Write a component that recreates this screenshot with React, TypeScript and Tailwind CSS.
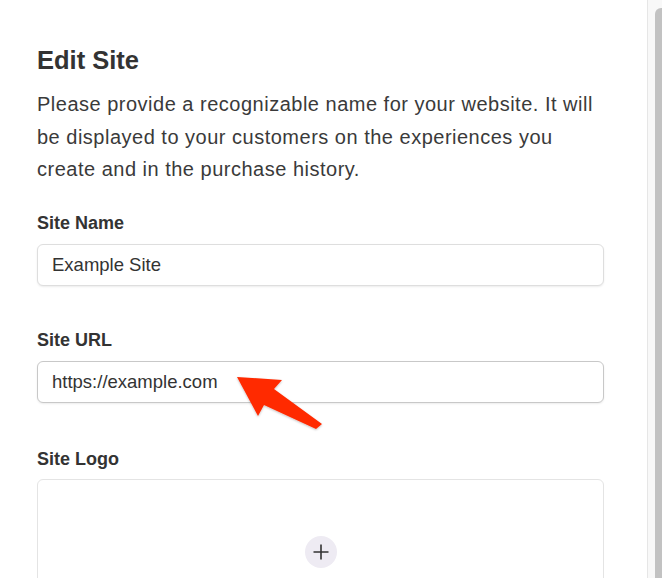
export default function App() {
  return (
    <div className="relative flex h-[578px] w-[662px] overflow-hidden bg-white font-['Liberation_Sans',Arial,sans-serif] text-[#333333]">
      <div className="w-[647px] shrink-0 pl-[37px] pt-[45px]">
        <div className="w-[567px]">
          <h2 className="text-[25.5px] leading-[30px] font-semibold text-[#333333]">Edit Site</h2>
          <p className="mt-[13px] text-[20px] leading-[32.5px] tracking-[0.5px] text-[#3a3a3a]">
            Please provide a recognizable name for your website. It will be displayed to your customers on the
            experiences you create and in the purchase history.
          </p>

          <label className="mt-[27px] block text-[18px] leading-[20px] font-semibold">Site Name</label>
          <div className="mt-[11px] flex h-[42px] items-center rounded-[6px] border border-[#dedede] bg-white px-[14px] text-[18.5px] shadow-[0_1px_2px_rgba(0,0,0,0.08)]">
            Example Site
          </div>

          <label className="mt-[44px] block text-[18px] leading-[20px] font-semibold">Site URL</label>
          <div className="mt-[11px] flex h-[42px] items-center rounded-[6px] border border-[#c8c8c8] bg-white px-[14px] text-[18.5px] shadow-[0_1px_2px_rgba(0,0,0,0.08)]">
            https://example.com
          </div>

          <label className="mt-[46px] block text-[18px] leading-[20px] font-semibold">Site Logo</label>
          <div className="mt-[10px] flex h-[160px] justify-center rounded-[6px] border border-[#e4e4e4] bg-white pt-[56px]">
            <div className="flex h-[32px] w-[32px] items-center justify-center rounded-full bg-[#eeebf3]">
              <svg width="18" height="18" viewBox="0 0 18 18" fill="none" stroke="#333" strokeWidth="1.6">
                <path d="M9 1.5v15M1.5 9h15" />
              </svg>
            </div>
          </div>
        </div>
      </div>

      <div className="w-px shrink-0 bg-[#e6e6e6]" />
      <div className="flex w-[14px] shrink-0 justify-end bg-[#f8f8f8] pt-[8px]">
        <div className="h-full w-[7px] rounded-tl-[6px] bg-[#c2c2c2]" />
      </div>

      <svg className="pointer-events-none absolute left-0 top-0" width="662" height="578" viewBox="0 0 662 578">
        <defs>
          <filter id="sh" x="-20%" y="-20%" width="140%" height="140%">
            <feDropShadow dx="0" dy="1" stdDeviation="1" floodColor="#000" floodOpacity="0.25" />
          </filter>
        </defs>
        <polygon
          points="237,377 282,380 274,389 322,424 316,429 264,405 258,416"
          fill="#ff2a00"
          filter="url(#sh)"
        />
      </svg>
    </div>
  );
}
